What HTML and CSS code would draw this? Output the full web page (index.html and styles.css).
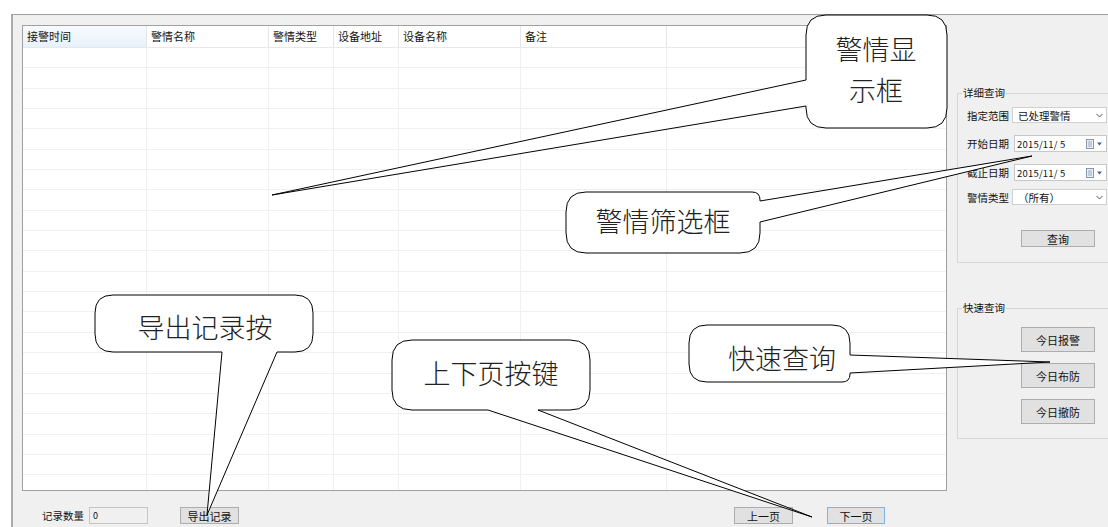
FILE: index.html
```html
<!DOCTYPE html>
<html>
<head>
  <title>警情查询</title>
  <link rel="stylesheet" href="styles.css">
</head>
<body>
  <div class="window">
    <div class="main">
      <div class="list-area">
        <div class="grid">
          <div class="grid-head">
            <div class="head-cell active">接警时间</div>
            <div class="head-cell">警情名称</div>
            <div class="head-cell">警情类型</div>
            <div class="head-cell">设备地址</div>
            <div class="head-cell">设备名称</div>
            <div class="head-cell">备注</div>
            <div class="head-cell"></div>
          </div>
          <div class="grid-body" id="grid-body"></div>
        </div>

        <div class="footer">
          <span class="count-label">记录数量</span>
          <div class="count-box">0</div>
          <button class="btn export-btn">导出记录</button>
          <div class="pager">
            <button class="btn prev-btn">上一页</button>
            <button class="btn next-btn">下一页</button>
          </div>
        </div>
      </div>

      <div class="side">
        <fieldset class="group group-detail">
          <legend>详细查询</legend>
          <div class="detail-body">
            <div class="field-row row-range">
              <span class="field-label">指定范围</span>
              <div class="select"><span>已处理警情</span>
                <svg class="chevron" width="7" height="5" viewBox="0 0 7 5"><path d="M0.5 1 L3.5 4 L6.5 1" fill="none" stroke="#555" stroke-width="1"/></svg>
              </div>
            </div>
            <div class="field-row row-date">
              <span class="field-label">开始日期</span>
              <div class="date-input"><span>2015/11/ 5</span>
                <svg class="cal" width="17" height="10" viewBox="0 0 17 10"><rect x="0.5" y="0.5" width="7" height="9" fill="#e9eef5" stroke="#8796ab"/><path d="M2 3 H6 M2 5 H6 M2 7 H6" stroke="#9aa8bb"/><path d="M11 3.5 H16 L13.5 6.5 Z" fill="#3c64a8"/></svg>
              </div>
            </div>
            <div class="field-row row-date">
              <span class="field-label">截止日期</span>
              <div class="date-input"><span>2015/11/ 5</span>
                <svg class="cal" width="17" height="10" viewBox="0 0 17 10"><rect x="0.5" y="0.5" width="7" height="9" fill="#e9eef5" stroke="#8796ab"/><path d="M2 3 H6 M2 5 H6 M2 7 H6" stroke="#9aa8bb"/><path d="M11 3.5 H16 L13.5 6.5 Z" fill="#3c64a8"/></svg>
              </div>
            </div>
            <div class="field-row row-type">
              <span class="field-label">警情类型</span>
              <div class="select"><span>（所有）</span>
                <svg class="chevron" width="7" height="5" viewBox="0 0 7 5"><path d="M0.5 1 L3.5 4 L6.5 1" fill="none" stroke="#555" stroke-width="1"/></svg>
              </div>
            </div>
            <div class="query-row">
              <button class="btn query-btn">查询</button>
            </div>
          </div>
        </fieldset>

        <fieldset class="group group-quick">
          <legend>快速查询</legend>
          <div class="quick-body">
            <button class="btn quick-btn">今日报警</button>
            <button class="btn quick-btn">今日布防</button>
            <button class="btn quick-btn">今日撤防</button>
          </div>
        </fieldset>
      </div>
    </div>
  </div>

  <!-- annotation callouts drawn over the form -->
  <svg class="callouts" width="1108" height="527" viewBox="0 0 1108 527">
    <g fill="#fff" stroke="#000" stroke-width="1">
      <path d="M826 15 H927 Q947 15 947 35 V108 Q947 128 927 128 H826 Q806 128 806 108 V106 L272 195 L806 80 V35 Q806 15 826 15 Z"/>
      <path d="M586 192 H752 Q760 192 760 200 V201 L1032 156 L760 222 V233 Q760 253 740 253 H586 Q566 253 566 233 V212 Q566 192 586 192 Z"/>
      <path d="M113 295 H295 Q313 295 313 313 V334 Q313 352 295 352 H277 L207 515 L222 352 H113 Q95 352 95 334 V313 Q95 295 113 295 Z"/>
      <path d="M412 340 H570 Q590 340 590 360 V390 Q590 410 570 410 H538 L812 517 L488 410 H412 Q392 410 392 390 V360 Q392 340 412 340 Z"/>
      <path d="M707 325 H832 Q850 325 850 343 V355 L1050 362 L850 373 V374 Q850 382 842 382 H707 Q689 382 689 364 V343 Q689 325 707 325 Z"/>
    </g>
    <g class="callout-text" text-anchor="middle">
      <text x="876" y="60">警情显</text>
      <text x="876" y="101">示框</text>
      <text x="663" y="232">警情筛选框</text>
      <text x="205" y="338">导出记录按</text>
      <text x="491" y="384">上下页按键</text>
      <text x="782" y="369">快速查询</text>
    </g>
  </svg>

  <script>
    // Empty rows of the alarm list
    const gridBody = document.querySelector('#grid-body');
    for (let i = 0; i < 23; i++) {
      const row = document.createElement('div');
      row.classList.add('grid-row');
      for (let c = 0; c < 7; c++) {
        const cell = document.createElement('div');
        cell.classList.add('cell');
        row.appendChild(cell);
      }
      gridBody.appendChild(row);
    }
  </script>
</body>
</html>
```

FILE: styles.css
```css
body {
  margin: 0;
  width: 1108px;
  height: 527px;
  overflow: hidden;
  position: relative;
  background-color: #fff;
  font-family: "Noto Sans CJK SC", sans-serif;
  font-size: 11px;
  color: #111;
}

.window {
  margin: 14px 0 0 11px;
  height: 513px;
  box-sizing: border-box;
  padding: 10px 0 0 9px;
  background-color: #f0f0f0;
  border-top: 1px solid #a0a0a0;
  border-left: 2px solid #ababab;
}

.main {
  display: flex;
}

.list-area {
  width: 925px;
  flex: none;
}

/* alarm list */
.grid {
  height: 466px;
  box-sizing: border-box;
  border: 1px solid #a0a0a0;
  background-color: #fff;
  overflow: hidden;
}

.grid-head,
.grid-row {
  display: grid;
  grid-template-columns: 124px 122px 65px 65px 122px 146px 1fr;
}

.grid-head {
  height: 22px;
  box-sizing: border-box;
  border-bottom: 1px solid #e8e8e8;
}

.head-cell {
  padding-left: 4px;
  line-height: 21px;
  white-space: nowrap;
  border-right: 1px solid #e5e5e5;
}

.head-cell.active {
  background: linear-gradient(#f7fbff, #e8f1fb);
}

.grid-row {
  height: 20.35px;
  box-sizing: border-box;
  border-bottom: 1px solid #f0f0f0;
}

.cell {
  border-right: 1px solid #f0f0f0;
}

.head-cell:last-child,
.cell:last-child {
  border-right: none;
}

/* buttons */
.btn {
  box-sizing: border-box;
  padding: 0;
  border: 1px solid #adadad;
  background-color: #e1e1e1;
  font-family: inherit;
  font-size: 11px;
  color: #111;
}

/* footer */
.footer {
  display: flex;
  align-items: center;
  height: 17px;
  margin-top: 16px;
  padding-left: 20px;
}

.count-label {
  width: 40px;
  font-size: 10.5px;
  white-space: nowrap;
}

.count-box {
  width: 59px;
  height: 17px;
  margin-left: 7px;
  box-sizing: border-box;
  padding-left: 3px;
  border: 1px solid #c5c5c5;
  background-color: #f0f0f0;
  font-size: 9px;
  line-height: 15px;
}

.export-btn {
  width: 59px;
  height: 17px;
  margin-left: 32px;
}

.pager {
  display: flex;
  gap: 34px;
  margin-left: auto;
  margin-right: 62px;
}

.prev-btn {
  width: 59px;
  height: 17px;
}

.next-btn {
  width: 58px;
  height: 17px;
  border-color: #7fb3e8;
}

/* right side panel */
.side {
  width: 160px;
  margin-left: 10px;
  flex: none;
}

.group {
  margin: 0;
  padding: 0;
  min-width: 0;
  border: 1px solid #d5d5d5;
}

.group legend {
  margin-left: 4px;
  padding: 0 1px;
  font-size: 10.5px;
  line-height: 14px;
}

.group-detail {
  margin-top: 61px;
}

.detail-body {
  padding: 7px 0 15px 9px;
}

.field-row {
  display: flex;
  align-items: center;
  height: 16px;
}

.row-date {
  height: 17px;
  margin-top: 12px;
}

.row-type {
  margin-top: 8px;
}

.field-label {
  width: 45px;
  font-size: 10.5px;
  white-space: nowrap;
}

.select {
  display: flex;
  align-items: center;
  justify-content: space-between;
  width: 95px;
  height: 16px;
  box-sizing: border-box;
  padding: 0 3px 0 5px;
  border: 1px solid #d0d0d0;
  background-color: #fff;
  font-size: 10.5px;
}

.date-input {
  display: flex;
  align-items: center;
  justify-content: space-between;
  width: 93px;
  height: 17px;
  margin-left: 2px;
  box-sizing: border-box;
  padding: 0 3px 0 2px;
  border: 1px solid #c8c8c8;
  background-color: #fff;
  font-size: 9.5px;
  letter-spacing: 0.2px;
}

.query-row {
  margin-top: 25px;
  padding-left: 54px;
}

.query-btn {
  width: 74px;
  height: 17px;
}

.group-quick {
  margin-top: 38px;
}

.quick-body {
  display: flex;
  flex-direction: column;
  gap: 11px;
  padding: 12px 0 14px 63px;
}

.quick-btn {
  width: 74px;
  height: 25px;
}

/* annotation overlay */
.callouts {
  position: absolute;
  top: 0;
  left: 0;
  pointer-events: none;
}

.callout-text text {
  font-family: "Noto Sans CJK SC", sans-serif;
  font-size: 27px;
  font-weight: 300;
  fill: #222;
}
```
